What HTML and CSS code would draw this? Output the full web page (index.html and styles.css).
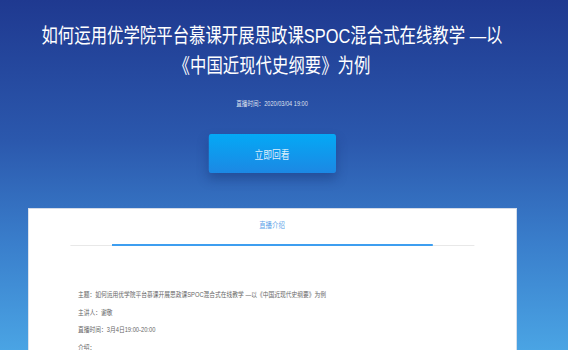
FILE: index.html
```html
<!DOCTYPE html>
<html lang="zh-CN">
<head>
    <meta charset="UTF-8">
    <meta name="viewport" content="width=device-width, initial-scale=1.0">
    <title>直播详情</title>
<link rel="stylesheet" href="styles.css">
</head>
<body>
    <div class="page">
        <div class="live-head">
            <h1 class="live-title">如何运用优学院平台慕课开展思政课SPOC混合式在线教学 —以<br>《中国近现代史纲要》为例</h1>
            <div class="live-time">直播时间：2020/03/04 19:00</div>
            <button class="replay-button">立即回看</button>
        </div>

        <div class="live-card">
            <div class="tab-bar">
                <div class="tab active">直播介绍</div>
            </div>
            <div class="live-info">
                <p>主题：如何运用优学院平台慕课开展思政课SPOC混合式在线教学 —以《中国近现代史纲要》为例</p>
                <p>主讲人：谢敬</p>
                <p>直播时间：3月4日19:00-20:00</p>
                <p>介绍：</p>
            </div>
        </div>
    </div>
</body>
</html>
```

FILE: styles.css
```css
* {
    margin: 0;
    padding: 0;
    box-sizing: border-box;
}

html, body {
    height: 100%;
    overflow: hidden;
}

body {
    font-family: 'Liberation Sans', 'Noto Sans CJK SC', sans-serif;
    background: linear-gradient(180deg, #1f3990 0%, #2b58ad 40%, #3a7fcc 70%, #4aa4e4 100%);
}

/* the whole page is drawn a bit narrow */
.page {
    width: 710px;
    height: 350px;
    padding-right: 30px;
    overflow: hidden;
    transform: scaleX(0.8);
    transform-origin: 0 0;
}

.live-head {
    display: flex;
    flex-direction: column;
    align-items: center;
    padding-top: 21px;
}

.live-title {
    font-size: 20.5px;
    font-weight: normal;
    line-height: 30px;
    color: #fff;
    text-align: center;
}

.live-time {
    margin-top: 18px;
    font-size: 7px;
    line-height: 10px;
    color: rgba(255, 255, 255, 0.85);
}

.replay-button {
    margin-top: 25px;
    width: 159px;
    height: 39px;
    border: none;
    border-radius: 3px;
    background: linear-gradient(180deg, #04a9f5, #1c88e4);
    box-shadow: 0 6px 12px rgba(15, 40, 100, 0.35);
    color: rgba(255, 255, 255, 0.88);
    font-family: inherit;
    font-size: 11px;
    cursor: pointer;
}

.live-card {
    margin: 35px auto 0;
    width: 611px;
    height: 200px;
    background: #fff;
    border: 1px solid #d3dbe8;
    padding: 11px 0 0;
}

.tab-bar {
    width: 505px;
    margin: 0 auto;
    display: flex;
    justify-content: center;
    border-bottom: 1px solid #e8e8e8;
}

.tab {
    width: 401px;
    text-align: center;
    font-size: 8px;
    line-height: 12px;
    padding-bottom: 12px;
    color: #5a9fe8;
}

.tab.active {
    border-bottom: 2px solid #3d9ef0;
    margin-bottom: -1px;
}

.live-info {
    padding: 40px 62px 0;
}

.live-info p {
    font-size: 7.2px;
    line-height: 17.5px;
    color: #666;
}
```
